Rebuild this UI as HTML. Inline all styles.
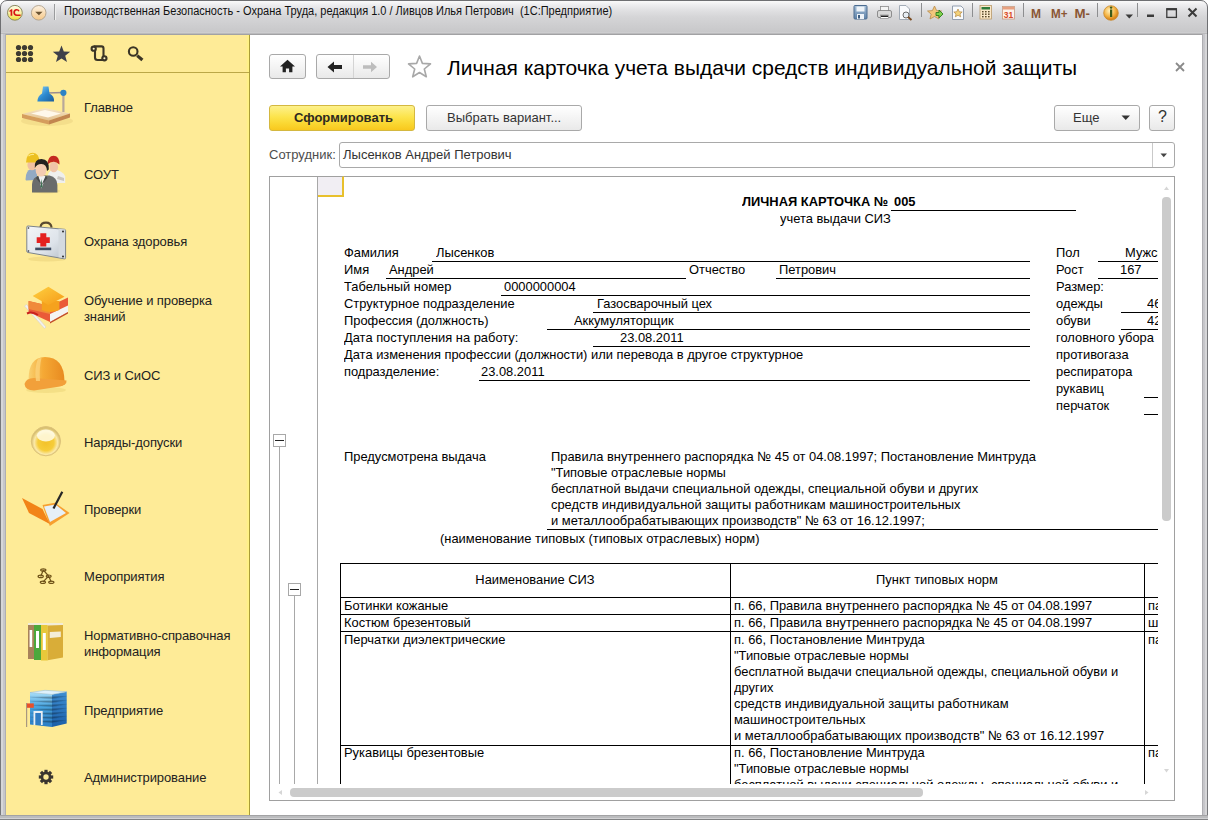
<!DOCTYPE html>
<html><head><meta charset="utf-8">
<style>
*{margin:0;padding:0;box-sizing:border-box}
html,body{width:1208px;height:820px;overflow:hidden;background:#fff;font-family:"Liberation Sans",sans-serif;position:relative}
.a{position:absolute}
.t{position:absolute;white-space:nowrap;line-height:16px}
/* frame */
#frame{left:0;top:0;width:1208px;height:820px;border-radius:7px 7px 0 0;background:linear-gradient(#fafafa 0,#ededef 4px,#e1e1e3 9px,#d5d5d7 16px,#cdcdcf 25px,#c8c8ca 31px,#d2d2d4 32px,#a2a2a4 33px,#a2a2a4 34px,#c4c5c7 35px,#bfc0c2 100%);border:1px solid #6e6f72;}
#title{left:64px;top:4px;font-size:12px;color:#111;line-height:15px;transform:scaleX(0.917);transform-origin:0 0}
.sep{position:absolute;width:1px;background:#9a9b9d;box-shadow:1px 0 0 #eee}
/* sidebar */
#side{left:6px;top:35px;width:244px;height:780px;background:linear-gradient(90deg,#feeb97 0,#feeb97 240px,#fff285 242px,#fff285 243px);border-right:1px solid #aa9c38}
#sidetb{left:6px;top:72px;width:243px;height:1px;background:#bba748}
.sl{position:absolute;left:84px;font-size:13px;color:#222;line-height:16px;white-space:nowrap;letter-spacing:-0.1px}
/* main */
#main{left:250px;top:35px;width:952px;height:780px;background:#fff}
.btn{position:absolute;border:1px solid #a9a9a9;border-radius:3px;background:linear-gradient(#ffffff,#f4f4f4 50%,#e9e9e9);}
.sheet{font-size:13.5px;color:#000}
.sheet .t{transform:scaleX(0.955);transform-origin:0 0;margin-top:-1px}
.sheet .tc{transform-origin:50% 0}
.ul{position:absolute;height:1px;background:#000}
.vl{position:absolute;width:1px;background:#000}
</style></head><body>
<div id="frame" class="a"></div>
<div class="a" style="left:0;top:34px;width:6px;height:786px;background:linear-gradient(90deg,#77787b 0 1px,#d6d6d8 1px 3px,#c6c6ca 3px 5px,#aeaeb2 5px 6px)"></div>
<div class="a" style="left:1202px;top:34px;width:6px;height:786px;background:linear-gradient(90deg,#aeaeb2 0 1px,#c6c6ca 1px 3px,#d6d6d8 3px 5px,#77787b 5px 6px)"></div>
<div class="a" style="left:0;top:815px;width:1208px;height:5px;background:linear-gradient(#a3a3a5 0 1px,#bbbcbe 1px 3px,#d2d2d4 3px 4px,#838486 4px 5px)"></div>
<!-- titlebar -->
<svg class="a" style="left:0;top:0" width="60" height="30" viewBox="0 0 60 30">
<defs>
<linearGradient id="gLogo" x1="0" y1="0" x2="0" y2="1"><stop offset="0" stop-color="#fdfbe8"/><stop offset=".55" stop-color="#f9f0a0"/><stop offset="1" stop-color="#f2dc30"/></linearGradient>
<linearGradient id="gDd" x1="0" y1="0" x2="0" y2="1"><stop offset="0" stop-color="#fdf2e2"/><stop offset="1" stop-color="#f6c888"/></linearGradient>
</defs>
<circle cx="14.9" cy="12.8" r="7.4" fill="url(#gLogo)" stroke="#8c8a60" stroke-width="1"/>
<path d="M9.3 10.8 L11.3 9.2 L12.3 9.2 L12.3 15.8 L10.6 15.8 L10.6 11.3 L9.6 12 Z" fill="#d81414"/>
<path d="M19.6 11 Q19 9 16.6 9 Q13.3 9.2 13.3 12.5 Q13.4 15.9 16.8 15.9 L20.6 15.9 L20.6 14.5 L16.9 14.5 Q15 14.5 15 12.5 Q15 10.4 16.8 10.4 Q18.2 10.4 18.3 11.6 Z" fill="#d81414"/>
<circle cx="38.7" cy="12.8" r="7.3" fill="url(#gDd)" stroke="#b0a08a" stroke-width=".9"/>
<path d="M35.2 11.8 L42.6 11.8 L38.9 15.3 Z" fill="#6b5332"/>
</svg>
<div class="sep" style="left:54px;top:4px;height:16px"></div>
<div id="title" class="a">Производственная Безопасность - Охрана Труда, редакция 1.0 / Ливцов Илья Петрович&nbsp; (1С:Предприятие)</div>

<!-- titlebar right icons -->
<svg class="a" style="left:840px;top:0" width="368" height="34" viewBox="840 0 368 34">
<defs>
<linearGradient id="gFl" x1="0" y1="0" x2="0" y2="1"><stop offset="0" stop-color="#a6bfd8"/><stop offset="1" stop-color="#5f82a8"/></linearGradient>
<radialGradient id="gInfo" cx=".4" cy=".35" r=".6"><stop offset="0" stop-color="#fff2c0"/><stop offset=".6" stop-color="#f6b84a"/><stop offset="1" stop-color="#d88418"/></radialGradient>
</defs>
<!-- save -->
<rect x="854" y="5.5" width="13" height="13.5" rx="1" fill="url(#gFl)" stroke="#4c6c90" stroke-width="1"/>
<rect x="856.5" y="6.5" width="8" height="5" fill="#eef3f8"/>
<rect x="857" y="14" width="7" height="5" fill="#eef3f8"/>
<rect x="858" y="15" width="2" height="3.5" fill="#3c5c80"/>
<!-- print -->
<rect x="880.5" y="6.5" width="8" height="5" fill="#f4f4f4" stroke="#8a8a8a" stroke-width=".8"/>
<rect x="877.5" y="10.5" width="14" height="7" rx="1.5" fill="#d8d8d8" stroke="#7a7a7a" stroke-width=".8"/>
<rect x="880.5" y="15" width="8" height="3.5" fill="#fff" stroke="#7a7a7a" stroke-width=".6"/>
<rect x="881" y="15.5" width="7" height="1.5" fill="#222"/>
<!-- preview -->
<path d="M899.5 5.5 H906 L909.5 9 V19.5 H899.5 Z" fill="#fafbfd" stroke="#9aa4b0" stroke-width=".9"/>
<circle cx="906" cy="15" r="3" fill="#e8eef4" stroke="#6a6a6a" stroke-width="1"/>
<path d="M908 17 L911.5 20" stroke="#7a4a20" stroke-width="2"/>
<!-- separators -->
<rect x="921" y="3" width="1" height="14" fill="#8d8e90"/>
<rect x="972" y="3" width="1" height="14" fill="#8d8e90"/>
<rect x="1023" y="3" width="1" height="14" fill="#8d8e90"/>
<rect x="1097" y="3" width="1" height="14" fill="#8d8e90"/>
<rect x="1137" y="3" width="1" height="14" fill="#8d8e90"/>
<!-- star arrow -->
<path d="M934.5 6 L936.6 10.6 L941.5 11 L937.8 14.2 L939 19 L934.5 16.5 L930 19 L931.2 14.2 L927.5 11 L932.4 10.6 Z" fill="#f2c67c" stroke="#b88a4a" stroke-width=".8"/>
<path d="M936 12.5 H939 V10 L943 14 L939 18 V15.5 H936 Z" fill="#7ed04a" stroke="#2f7a20" stroke-width=".9"/>
<!-- star doc -->
<path d="M952.5 6 H961 L963.5 8.5 V19.5 H952.5 Z" fill="#fafbfd" stroke="#8a96a8" stroke-width=".9"/>
<path d="M958 9 L959.3 11.8 L962.2 12 L960 14 L960.7 16.8 L958 15.3 L955.3 16.8 L956 14 L953.8 12 L956.7 11.8 Z" fill="#f4d27a" stroke="#a87830" stroke-width=".6"/>
<!-- calc -->
<rect x="980" y="5.5" width="11.5" height="13.5" fill="#fbe8c8" stroke="#b89a6a" stroke-width=".8"/>
<rect x="981.5" y="7" width="8.5" height="2.5" fill="#2e7a3a"/>
<g fill="#5a4a2a"><rect x="982" y="11" width="1.6" height="1.4"/><rect x="985" y="11" width="1.6" height="1.4"/><rect x="988" y="11" width="1.6" height="1.4"/><rect x="982" y="13.5" width="1.6" height="1.4"/><rect x="985" y="13.5" width="1.6" height="1.4"/><rect x="988" y="13.5" width="1.6" height="1.4"/><rect x="982" y="16" width="1.6" height="1.4"/><rect x="985" y="16" width="1.6" height="1.4"/><rect x="988" y="16" width="1.6" height="1.4"/></g>
<!-- calendar -->
<rect x="1002.5" y="6.5" width="12" height="12.5" fill="#fdf2ea" stroke="#c89a80" stroke-width=".8"/>
<rect x="1003" y="7" width="11" height="2.5" fill="#e8a080"/>
<text x="1008.5" y="17.8" font-family="Liberation Sans" font-size="8.5" font-weight="bold" fill="#d84a2a" text-anchor="middle">31</text>
<!-- M -->
<g font-family="Liberation Sans" font-weight="bold" font-size="13.5" fill="#8a5634">
<text x="1031" y="17.6" textLength="10" lengthAdjust="spacingAndGlyphs">M</text>
<text x="1051" y="17.6" textLength="16.5" lengthAdjust="spacingAndGlyphs">M+</text>
<text x="1074.5" y="17.6" textLength="15.5" lengthAdjust="spacingAndGlyphs">M-</text>
</g>
<!-- info -->
<circle cx="1111" cy="13" r="7.3" fill="url(#gInfo)" stroke="#c88a30" stroke-width=".8"/>
<rect x="1110" y="9.5" width="2.2" height="7.5" fill="#3a5a1a"/>
<circle cx="1111.1" cy="7.6" r="1.2" fill="#3a5a1a"/>
<path d="M1125.5 14.5 H1133 L1129.25 18.5 Z" fill="#3a3a3a"/>
<!-- min max close -->
<rect x="1147" y="14.5" width="7" height="2.5" fill="#3a3a3a"/>
<rect x="1166.8" y="8.8" width="9.6" height="8.6" fill="none" stroke="#3a3a3a" stroke-width="1.3"/>
<rect x="1166.5" y="8.3" width="10.2" height="2" fill="#3a3a3a"/>
<path d="M1188.5 8.5 L1196.5 16.5 M1196.5 8.5 L1188.5 16.5" stroke="#3a3a3a" stroke-width="2"/>
</svg>

<!-- sidebar -->
<div id="side" class="a"></div>
<div id="sidetb" class="a"></div>
<!-- sidebar toolbar icons -->
<svg class="a" style="left:0;top:0" width="250" height="820" viewBox="0 0 250 820">
<g fill="#3d3a32">
<circle cx="18.5" cy="47.5" r="2.6"/><circle cx="24.5" cy="47.5" r="2.6"/><circle cx="30.5" cy="47.5" r="2.6"/>
<circle cx="18.5" cy="53.5" r="2.6"/><circle cx="24.5" cy="53.5" r="2.6"/><circle cx="30.5" cy="53.5" r="2.6"/>
<circle cx="18.5" cy="59.5" r="2.6"/><circle cx="24.5" cy="59.5" r="2.6"/><circle cx="30.5" cy="59.5" r="2.6"/>
</g>
<path d="M61.5 45.5 L63.8 51.6 L70.2 51.8 L65.2 55.8 L67 62 L61.5 58.4 L56 62 L57.8 55.8 L52.8 51.8 L59.2 51.6 Z" fill="#3e404a"/>
<g fill="none" stroke="#3b3526" stroke-width="2.1">
<path d="M93.7 46.4 H101.5 Q103.5 46.4 103.5 48.4 V57.5"/>
<path d="M95 50.2 V57.5 Q95 60 97.5 60 H104"/>
<circle cx="93.7" cy="48.7" r="2.1" fill="#fff6c8"/>
<circle cx="104.4" cy="58.3" r="2.1" fill="#fff6c8"/>
<circle cx="133.2" cy="51.5" r="4.3"/>
</g>
<path d="M137.2 55.6 L142.4 60" stroke="#3b3526" stroke-width="3.2"/>
</svg>
<!-- sidebar section icons -->
<svg class="a" style="left:0;top:0" width="250" height="820" viewBox="0 0 250 820">
<defs>
<linearGradient id="gBlue" x1="0" y1="0" x2="1" y2="1"><stop offset="0" stop-color="#8fd2f5"/><stop offset=".5" stop-color="#2c8ad0"/><stop offset="1" stop-color="#1b5c9a"/></linearGradient>
<linearGradient id="gTan" x1="0" y1="0" x2="0" y2="1"><stop offset="0" stop-color="#f6e6c8"/><stop offset="1" stop-color="#e2c08e"/></linearGradient>
<linearGradient id="gSilver" x1="0" y1="0" x2="1" y2="1"><stop offset="0" stop-color="#f4f6f8"/><stop offset=".6" stop-color="#dde3ea"/><stop offset="1" stop-color="#b8c0c8"/></linearGradient>
<linearGradient id="gHelm" x1="0" y1="0" x2="1" y2="0"><stop offset="0" stop-color="#f9d070"/><stop offset=".4" stop-color="#f5a935"/><stop offset="1" stop-color="#e88a20"/></linearGradient>
<radialGradient id="gOrb" cx=".5" cy=".55" r=".5"><stop offset="0" stop-color="#f3c22a"/><stop offset=".55" stop-color="#f6cd3a"/><stop offset=".8" stop-color="#fbe9a8"/><stop offset="1" stop-color="#d8c070"/></radialGradient>
<linearGradient id="gBldF" x1="0" y1="0" x2="0" y2="1"><stop offset="0" stop-color="#a9def8"/><stop offset=".4" stop-color="#4aa6e0"/><stop offset="1" stop-color="#2a7cc4"/></linearGradient>
<linearGradient id="gBldR" x1="0" y1="0" x2="0" y2="1"><stop offset="0" stop-color="#3f8fd2"/><stop offset="1" stop-color="#1b5ea8"/></linearGradient>
<linearGradient id="gCap" x1="0" y1="0" x2="1" y2="1"><stop offset="0" stop-color="#ffd040"/><stop offset="1" stop-color="#f59a18"/></linearGradient>
</defs>
<!-- 1 lamp -->
<ellipse cx="47" cy="121" rx="26" ry="5" fill="#e9d27f" opacity=".5"/>
<path d="M22 114 L45 108 L70 113.5 L49 120.5 Z" fill="url(#gTan)"/>
<path d="M31 113.5 L45 110 L61 113.5 L48 117.5 Z" fill="#fff8ea"/>
<path d="M22 114 L49 120.5 L49 124.5 L22 118 Z" fill="#d59d5d"/>
<path d="M49 120.5 L70 113.5 L70 117.5 L49 124.5 Z" fill="#c28650"/>
<rect x="62.3" y="93" width="2.2" height="19" fill="#b8a89a"/>
<path d="M47 93 L63 92.5" stroke="#9a8c90" stroke-width="1.4"/>
<circle cx="63.4" cy="92.8" r="3.1" fill="#2b83c6"/>
<path d="M43 86.5 L48.5 86.5 L49.5 93.5 Q54.5 96 54 101.5 L37.4 101.5 Q37.5 96 42 93.5 Z" fill="url(#gBlue)"/>
<!-- 2 people -->
<ellipse cx="46" cy="191" rx="14" ry="2.5" fill="#e8d078" opacity=".5"/>
<path d="M25.5 179.5 Q25.5 170.5 31 169 L37 169 L37 180 L26 180.5 Z" fill="#93aac4"/>
<ellipse cx="32" cy="165" rx="4.6" ry="5.2" fill="#f0c0a0"/>
<path d="M26 162.5 Q26.5 152.8 32.8 152.8 Q39.3 153 39.6 162.5 Z" fill="#ecc020"/>
<path d="M28.5 156 Q31 154 34 154.5" stroke="#fff2a0" stroke-width="1.2" fill="none" opacity=".8"/>
<path d="M48 183 L48 174.5 Q49.5 170.2 54 169.8 Q62.5 170.2 65.2 176.5 L65.2 183 Z" fill="#efefed"/>
<path d="M58 176 L64 178 L64 181 L57 179 Z" fill="#b0a8a0" opacity=".6"/>
<ellipse cx="53.8" cy="167" rx="4.3" ry="5.2" fill="#f0c4a8"/>
<path d="M47.6 164.5 Q47.8 155.8 53.5 155.8 Q59.6 155.8 59.5 164.5 Q56 161.5 53.5 161.8 Q50 162 47.6 164.5 Z" fill="#c42a20"/>
<path d="M32 192.5 L32 184.5 Q32.5 176.5 40 175.5 L49.5 175.5 Q57.2 177 57.4 185 L57.4 192.5 Z" fill="#6a6c6c"/>
<path d="M38.2 176 L41.6 188.5 L45.8 176 Z" fill="#eef0f0"/>
<path d="M41.6 178.5 L40.6 187.5 L42.6 187.5 Z" fill="#3a7050"/>
<path d="M38 175.6 L41.6 185 L36 178 Z M45.8 175.6 L41.6 185 L47.5 178 Z" fill="#4a4c4c"/>
<ellipse cx="41" cy="170" rx="5.4" ry="6.6" fill="#f4ccb2"/>
<path d="M34.8 168 Q34 159 41.5 159 Q49.5 159 48.8 169.5 L47 171 Q46.5 163.5 41 164 Q37 164.2 34.8 168 Z" fill="#242220"/>
<!-- 3 medkit -->
<ellipse cx="47" cy="259" rx="19" ry="2.5" fill="#e8d078" opacity=".5"/>
<path d="M40.5 227 Q41 222.6 46 222.6 Q51 222.6 51.6 227.6" fill="none" stroke="#5a4a30" stroke-width="2.1"/>
<path d="M28 226 L64.5 229.3 Q65.6 229.5 65.6 230.6 L65.6 257.6 Q65.6 259 64.3 258.8 L28 252.5 Q26.8 252.3 26.8 251 L26.8 227.2 Q26.8 225.9 28 226 Z" fill="url(#gSilver)" stroke="#7c848c" stroke-width="1"/>
<path d="M58.5 228.8 L65 229.4 L65 258.4 L58.5 257.3 Z" fill="#d4dae0"/>
<circle cx="63" cy="231.5" r="1" fill="#2a2a2a"/><circle cx="63" cy="256.5" r="1" fill="#2a2a2a"/>
<circle cx="28.5" cy="228" r=".8" fill="#2a2a2a"/><circle cx="28.5" cy="251" r=".8" fill="#2a2a2a"/>
<path d="M40.3 233.2 H46.3 V237.2 H49.8 V243 H46.3 V246.4 H40.3 V243 H36.7 V237.2 H40.3 Z" fill="#e42020"/>
<rect x="35.2" y="247.6" width="16" height="2.6" fill="#22304a" opacity=".85"/>
<!-- 4 education -->
<path d="M24.5 306 L44.5 328.5 L46 327 L26.5 304.5 Z" fill="#f2f2f0" stroke="#d8d0c8" stroke-width=".6"/>
<path d="M28.6 301 L50 306 L68 297.5 L68 312 L50 322 L28.6 312 Z" fill="#ea5a38"/>
<path d="M50 314 L68 305.5 L68 312 L50 322 Z" fill="#f4f4f4"/>
<path d="M50 322 L68 312 L68 313.5 L50 323.5 Z" fill="#c04a28"/>
<path d="M28.6 301 L50 306 L50 314 L28.6 309 Z" fill="#f08a3a"/>
<path d="M41.8 301 L59.4 301 L59.4 310 Q50 314 41.8 310 Z" fill="#f5a21e"/>
<path d="M32.7 296 L48.4 286.8 L64.5 296.7 L48.4 305 Z" fill="url(#gCap)"/>
<path d="M27 313.5 Q32 311 38 315" stroke="#c8201e" stroke-width="2" fill="none"/>
<!-- 5 helmet -->
<ellipse cx="46" cy="390" rx="20" ry="3" fill="#e8d070" opacity=".45"/>
<path d="M28.6 379 Q28.6 357.5 45 357 Q64 357 64.5 381 Z" fill="url(#gHelm)"/>
<path d="M24.5 384 Q26 378 34 378 L66.5 380.5 Q67 385 60 386.5 L34 390.5 Q25 390 24.5 384 Z" fill="#f2a03a"/>
<path d="M38 358.5 Q34 368 36 381 L40 381 Q39 368 41.5 358 Z" fill="#fbd27a" opacity=".8"/>
<!-- 6 orb -->
<circle cx="45.9" cy="441.2" r="14.6" fill="url(#gOrb)" stroke="#dcc27a" stroke-width="1"/>
<ellipse cx="45.9" cy="435.5" rx="9" ry="6" fill="#fffbe8" opacity=".85"/>
<!-- 7 folder pen -->
<path d="M42.5 505 L55 502.7 L69.6 513 L49.8 526 Z" fill="#f7a030"/>
<path d="M44 506.5 L55.5 504.5 L66 513 L50 522 Z" fill="#e6f0f8"/>
<path d="M22 498 L42.5 509 L49.8 524 L29 513 Z" fill="#f28418"/>
<path d="M62.3 491.7 L53.5 508.5" stroke="#262626" stroke-width="2.2"/>
<!-- 8 hierarchy -->
<g fill="none" stroke="#6f5218" stroke-width="1.2">
<path d="M43.3 570 L40.7 576.4 M43.3 570 L48.7 576 L51.3 582.2 M48.7 576 L42.9 582.2"/>
<ellipse cx="43.3" cy="570" rx="2.6" ry="1.2"/><ellipse cx="40.7" cy="576.4" rx="2.6" ry="1.2"/><ellipse cx="48.7" cy="576.2" rx="2.4" ry="1.2"/><ellipse cx="42.9" cy="582.3" rx="2.6" ry="1.2"/><ellipse cx="51.3" cy="582.3" rx="2.6" ry="1.2"/>
</g>
<!-- 9 binders -->
<rect x="28" y="623" width="35" height="3" fill="#f2ecd8"/>
<rect x="28" y="625" width="6" height="34" fill="#a8825a"/>
<rect x="34" y="625" width="7" height="35" fill="#4ca83c"/>
<rect x="41" y="625" width="6.6" height="35.5" fill="#e8c83a"/>
<path d="M47.6 625.5 L63 625 L63 657.5 L47.6 660.3 Z" fill="#d9ad38"/>
<rect x="29.6" y="630" width="2.6" height="17" fill="#fff"/>
<rect x="36" y="631" width="3" height="17" fill="#fff"/>
<rect x="42.8" y="633" width="3" height="17" fill="#fff"/>
<path d="M49.8 632 L60.8 631.5 L60.8 637 L49.8 638 Z" fill="#f4eed8"/>
<!-- 10 building -->
<path d="M30 692.5 L52 694.5 L52 727 L30 724.5 Z" fill="url(#gBldF)"/>
<path d="M52 694.5 L66.7 691.7 L66.7 723.5 L52 727 Z" fill="url(#gBldR)"/>
<path d="M30 692.5 L45 690.3 L66.7 691.7 L52 694.5 Z" fill="#dff1fb" stroke="#8cb8d8" stroke-width=".5"/>
<g stroke="#1f5c98" stroke-width=".6" opacity=".3">
<path d="M30 697 L52 699 L66.7 696.2 M30 701 L52 703 L66.7 700.2 M30 705 L52 707 L66.7 704.2 M30 709 L52 711 L66.7 708.2 M30 713 L52 715 L66.7 712.2 M30 717 L52 719 L66.7 716.2 M30 721 L52 723 L66.7 720.2"/>
</g>
<rect x="33.5" y="711" width="9.2" height="14" fill="#e8eef4"/>
<rect x="35.3" y="713" width="5.6" height="12" fill="#2f7cc4"/>
<rect x="26" y="703" width="1.2" height="24" fill="#a89880"/>
<rect x="27" y="703.4" width="6.8" height="4.4" fill="#e8502a"/>
<!-- 11 gear -->
<g transform="translate(46 777)">
<g fill="#3a3530">
<rect x="-1.6" y="-7.2" width="3.2" height="14.4"/>
<rect x="-1.6" y="-7.2" width="3.2" height="14.4" transform="rotate(45)"/>
<rect x="-1.6" y="-7.2" width="3.2" height="14.4" transform="rotate(90)"/>
<rect x="-1.6" y="-7.2" width="3.2" height="14.4" transform="rotate(135)"/>
<circle r="5.4"/>
</g>
<circle r="2.7" fill="#feeb97"/>
</g>
</svg>
<div class="sl" style="top:100px">Главное</div>
<div class="sl" style="top:167px">СОУТ</div>
<div class="sl" style="top:234px">Охрана здоровья</div>
<div class="sl" style="top:293px">Обучение и проверка<br>знаний</div>
<div class="sl" style="top:368px">СИЗ и СиОС</div>
<div class="sl" style="top:435px">Наряды-допуски</div>
<div class="sl" style="top:502px">Проверки</div>
<div class="sl" style="top:569px">Мероприятия</div>
<div class="sl" style="top:628px">Нормативно-справочная<br>информация</div>
<div class="sl" style="top:703px">Предприятие</div>
<div class="sl" style="top:770px">Администрирование</div>

<!-- main -->
<div id="main" class="a"></div>
<div class="btn" style="left:269px;top:54px;width:37px;height:25px"></div>
<div class="btn" style="left:316px;top:54px;width:74px;height:25px"></div>
<div class="a" style="left:353px;top:55px;width:1px;height:23px;background:#d4d4d4"></div>

<!-- nav icons -->
<svg class="a" style="left:279px;top:58px" width="18" height="16" viewBox="0 0 18 16"><path d="M8.5 1.8 L1 8.6 L3.6 8.6 L3.6 14.2 L6.9 14.2 L6.9 10.4 L10.1 10.4 L10.1 14.2 L13.4 14.2 L13.4 8.6 L16 8.6 Z" fill="#222"/></svg>
<svg class="a" style="left:326px;top:59px" width="18" height="16" viewBox="0 0 18 16"><path d="M1.5 8 L8 2.5 L8 6 L16 6 L16 10 L8 10 L8 13.5 Z" fill="#222"/></svg>
<svg class="a" style="left:361px;top:59px" width="18" height="16" viewBox="0 0 18 16"><path d="M16 8 L10 2.8 L10 6.3 L2 6.3 L2 9.7 L10 9.7 L10 13.2 Z" fill="#bdbdbd"/></svg>
<svg class="a" style="left:406px;top:54px" width="27" height="25" viewBox="0 0 27 25"><path d="M13.5 2 L16.4 9.4 L24.5 9.9 L18.3 15 L20.3 22.8 L13.5 18.5 L6.7 22.8 L8.7 15 L2.5 9.9 L10.6 9.4 Z" fill="#fff" stroke="#a8a8a8" stroke-width="1.6" stroke-linejoin="round"/></svg>
<svg class="a" style="left:1174px;top:61px" width="12" height="12" viewBox="0 0 12 12"><path d="M2 2 L10 10 M10 2 L2 10" stroke="#8a8a8a" stroke-width="1.8"/></svg>
<div class="t" style="left:447px;top:56px;font-size:20.95px;line-height:24px;color:#000">Личная карточка учета выдачи средств индивидуальной защиты</div>

<div class="a" style="left:269px;top:105px;width:146px;height:26px;border:1px solid #d4b840;border-radius:3px;background:linear-gradient(#fdf18c,#fce44c 45%,#fad630 75%,#f8c81e)"></div>
<div class="t" style="left:294px;top:110px;font-size:13px;font-weight:bold;color:#2e2a20">Сформировать</div>
<div class="btn" style="left:426px;top:105px;width:156px;height:26px"></div>
<div class="t" style="left:447px;top:110px;font-size:13px;color:#333">Выбрать вариант...</div>
<div class="btn" style="left:1054px;top:105px;width:86px;height:26px"></div>
<div class="t" style="left:1073px;top:110px;font-size:13px;color:#333">Еще</div>
<div class="btn" style="left:1149px;top:105px;width:26px;height:26px"></div>
<div class="t" style="left:1158px;top:109px;font-size:16px;color:#333">?</div>

<div class="t" style="left:269px;top:147px;font-size:13px;color:#4d4d4d">Сотрудник:</div>
<div class="a" style="left:339px;top:142px;width:836px;height:26px;border:1px solid #a9a9a9;border-radius:3px;background:#fff"></div>
<div class="a" style="left:1152px;top:143px;width:1px;height:24px;background:#c9c9c9"></div>
<div class="t" style="left:343px;top:147px;font-size:13px;color:#333">Лысенков Андрей Петрович</div>

<svg class="a" style="left:1121px;top:115px" width="10" height="6" viewBox="0 0 10 6"><path d="M0.5 0.5 L9 0.5 L4.75 5 Z" fill="#333"/></svg>
<svg class="a" style="left:1160px;top:153px" width="8" height="5" viewBox="0 0 8 5"><path d="M0.5 0.5 L7 0.5 L3.75 4.2 Z" fill="#444"/></svg>
<!-- spreadsheet box -->
<div class="a" style="left:269px;top:176px;width:906px;height:625px;border:1px solid #a0a0a0;background:#fff"></div>

<!-- outline area -->
<div class="a" style="left:317px;top:177px;width:1px;height:607px;background:#a8a8a8"></div>
<div class="a" style="left:318px;top:176px;width:26px;height:21px;background:#f1eef3;border-right:2px solid #e8c02c;border-bottom:2px solid #e8c02c;border-top:1px solid #a0a0a0"></div>
<div class="a" style="left:279px;top:446px;width:1px;height:338px;background:#a8a8a8"></div>
<div class="a" style="left:273px;top:434px;width:13px;height:13px;border:1px solid #a8a8a8;background:#fff"></div>
<div class="a" style="left:275px;top:440px;width:9px;height:1px;background:#222"></div>
<div class="a" style="left:294px;top:595px;width:1px;height:189px;background:#a8a8a8"></div>
<div class="a" style="left:288px;top:583px;width:13px;height:13px;border:1px solid #a8a8a8;background:#fff"></div>
<div class="a" style="left:290px;top:589px;width:9px;height:1px;background:#222"></div>
<!-- sheet content -->
<div class="a sheet" style="left:0;top:0;width:1208px;height:820px;clip-path:inset(177px 50px 36px 318px)">
<div class="t" style="left:742px;top:195px;font-weight:bold">ЛИЧНАЯ КАРТОЧКА №</div>
<div class="t" style="left:894px;top:195px;font-weight:bold">005</div>
<div class="ul" style="left:891px;top:210px;width:185px"></div>
<div class="t" style="left:780px;top:212px">учета выдачи СИЗ</div>
<div class="t" style="left:344px;top:246px">Фамилия</div>
<div class="t" style="left:344px;top:263px">Имя</div>
<div class="t" style="left:344px;top:280px">Табельный номер</div>
<div class="t" style="left:344px;top:297px">Структурное подразделение</div>
<div class="t" style="left:344px;top:314px">Профессия (должность)</div>
<div class="t" style="left:344px;top:331px">Дата поступления на работу:</div>
<div class="t" style="left:344px;top:348px">Дата изменения профессии (должности) или перевода в другое структурное</div>
<div class="t" style="left:344px;top:365px">подразделение:</div>
<div class="t" style="left:436px;top:246px">Лысенков</div>
<div class="ul" style="left:432px;top:261px;width:598px"></div>
<div class="t" style="left:389px;top:263px">Андрей</div>
<div class="ul" style="left:386px;top:278px;width:300px"></div>
<div class="t" style="left:504px;top:280px">0000000004</div>
<div class="ul" style="left:501px;top:295px;width:529px"></div>
<div class="t" style="left:597px;top:297px">Газосварочный цех</div>
<div class="ul" style="left:593px;top:312px;width:437px"></div>
<div class="t" style="left:574px;top:314px">Аккумуляторщик</div>
<div class="ul" style="left:547px;top:329px;width:483px"></div>
<div class="t" style="left:620px;top:331px">23.08.2011</div>
<div class="ul" style="left:593px;top:346px;width:437px"></div>
<div class="t" style="left:481px;top:365px">23.08.2011</div>
<div class="ul" style="left:479px;top:380px;width:551px"></div>
<div class="t" style="left:689px;top:263px">Отчество</div>
<div class="t" style="left:779px;top:263px">Петрович</div>
<div class="ul" style="left:776px;top:278px;width:254px"></div>
<div class="t" style="left:1056px;top:246px">Пол</div>
<div class="t" style="left:1056px;top:263px">Рост</div>
<div class="t" style="left:1056px;top:280px">Размер:</div>
<div class="t" style="left:1056px;top:297px">одежды</div>
<div class="t" style="left:1056px;top:314px">обуви</div>
<div class="t" style="left:1056px;top:331px">головного убора</div>
<div class="t" style="left:1056px;top:348px">противогаза</div>
<div class="t" style="left:1056px;top:365px">респиратора</div>
<div class="t" style="left:1056px;top:382px">рукавиц</div>
<div class="t" style="left:1056px;top:399px">перчаток</div>
<div class="ul" style="left:1098px;top:261px;width:60px"></div>
<div class="t" style="left:1125px;top:246px">Мужской</div>
<div class="ul" style="left:1098px;top:278px;width:60px"></div>
<div class="t" style="left:1120px;top:263px">167</div>
<div class="ul" style="left:1121px;top:312px;width:37px"></div>
<div class="t" style="left:1147px;top:297px">46</div>
<div class="ul" style="left:1121px;top:329px;width:37px"></div>
<div class="t" style="left:1147px;top:314px">42</div>
<div class="ul" style="left:1144px;top:397px;width:14px"></div>
<div class="ul" style="left:1144px;top:414px;width:14px"></div>
<div class="t" style="left:344px;top:450px">Предусмотрена выдача</div>
<div class="t" style="left:551px;top:450px">Правила внутреннего распорядка № 45 от 04.08.1997; Постановление Минтруда</div>
<div class="t" style="left:551px;top:466px">"Типовые отраслевые нормы</div>
<div class="t" style="left:551px;top:482px">бесплатной выдачи специальной одежды, специальной обуви и других</div>
<div class="t" style="left:551px;top:498px">средств индивидуальной защиты работникам машиностроительных</div>
<div class="t" style="left:551px;top:514px">и металлообрабатывающих производств" № 63 от 16.12.1997;</div>
<div class="ul" style="left:547px;top:529px;width:611px"></div>
<div class="t" style="left:440px;top:532px">(наименование типовых (типовых отраслевых) норм)</div>
<div class="ul" style="left:340px;top:563px;width:818px"></div>
<div class="ul" style="left:340px;top:597px;width:818px"></div>
<div class="ul" style="left:340px;top:614px;width:818px"></div>
<div class="ul" style="left:340px;top:631px;width:818px"></div>
<div class="ul" style="left:340px;top:745px;width:818px"></div>
<div class="vl" style="left:340px;top:563px;height:221px;background:#000"></div>
<div class="vl" style="left:730px;top:563px;height:221px;background:#000"></div>
<div class="vl" style="left:1144px;top:563px;height:221px;background:#000"></div>
<div class="t tc" style="left:340px;top:573px;width:390px;text-align:center">Наименование СИЗ</div>
<div class="t tc" style="left:730px;top:573px;width:414px;text-align:center">Пункт типовых норм</div>
<div class="t" style="left:344px;top:599px">Ботинки кожаные</div>
<div class="t" style="left:734px;top:599px">п. 66, Правила внутреннего распорядка № 45 от 04.08.1997</div>
<div class="t" style="left:1148px;top:599px">пара</div>
<div class="t" style="left:344px;top:616px">Костюм брезентовый</div>
<div class="t" style="left:734px;top:616px">п. 66, Правила внутреннего распорядка № 45 от 04.08.1997</div>
<div class="t" style="left:1148px;top:616px">шт</div>
<div class="t" style="left:344px;top:633px">Перчатки диэлектрические</div>
<div class="t" style="left:734px;top:633px">п. 66, Постановление Минтруда</div>
<div class="t" style="left:734px;top:649px">"Типовые отраслевые нормы</div>
<div class="t" style="left:734px;top:665px">бесплатной выдачи специальной одежды, специальной обуви и</div>
<div class="t" style="left:734px;top:681px">других</div>
<div class="t" style="left:734px;top:697px">средств индивидуальной защиты работникам</div>
<div class="t" style="left:734px;top:713px">машиностроительных</div>
<div class="t" style="left:734px;top:729px">и металлообрабатывающих производств" № 63 от 16.12.1997</div>
<div class="t" style="left:1148px;top:633px">пара</div>
<div class="t" style="left:344px;top:746px">Рукавицы брезентовые</div>
<div class="t" style="left:734px;top:746px">п. 66, Постановление Минтруда</div>
<div class="t" style="left:734px;top:762px">"Типовые отраслевые нормы</div>
<div class="t" style="left:734px;top:778px">бесплатной выдачи специальной одежды, специальной обуви и</div>
<div class="t" style="left:1148px;top:746px">пара</div>
</div>
<!-- scrollbars -->
<svg class="a" style="left:0;top:0" width="1208" height="820" viewBox="0 0 1208 820">
<g fill="#d6d6d6">
<path d="M1164 190 L1169 190 L1166.5 186.5 Z"/>
<path d="M1164 769 L1169 769 L1166.5 772.5 Z"/>
<path d="M282 790 L282 795 L278.5 792.5 Z"/>
<path d="M1145 790 L1145 795 L1148.5 792.5 Z"/>
</g></svg>

<div class="a" style="left:1162px;top:197px;width:9px;height:324px;border-radius:4px;background:#cbcbcb"></div>
<div class="a" style="left:290px;top:788px;width:633px;height:9px;border-radius:4px;background:#cbcbcb"></div>
</body></html>
